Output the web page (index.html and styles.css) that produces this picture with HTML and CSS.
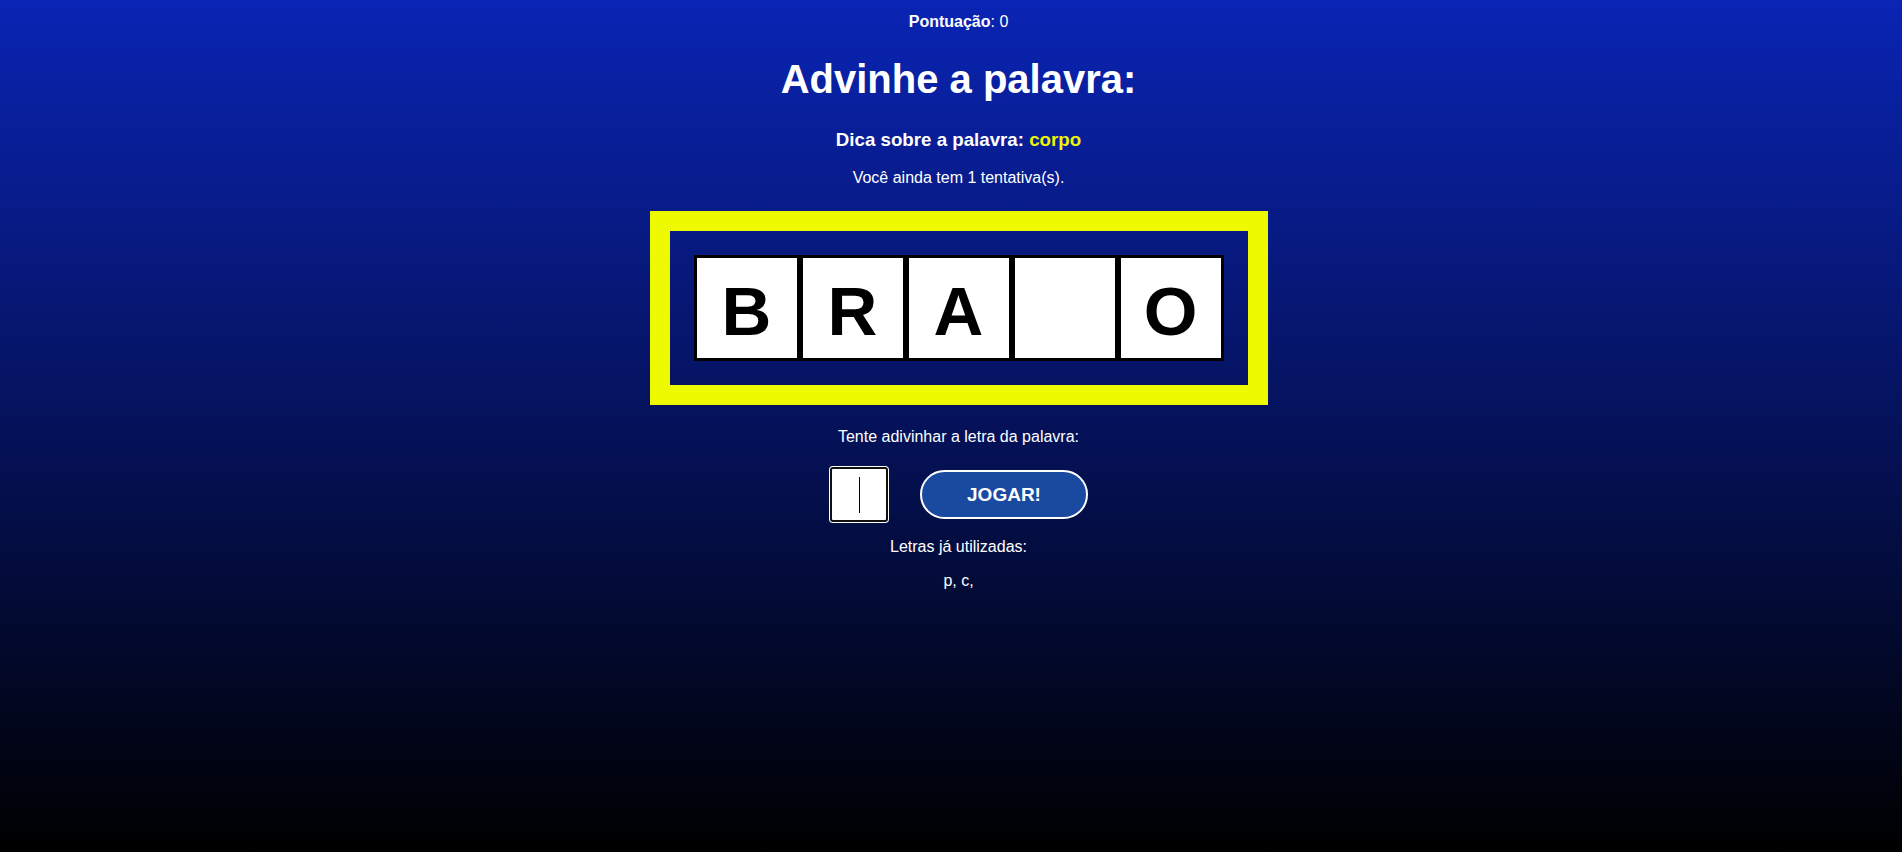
FILE: index.html
```html
<!DOCTYPE html>
<html lang="pt-BR">
<head>
<meta charset="utf-8">
<title>Advinhe a palavra</title>
<link rel="stylesheet" href="styles.css">
</head>
<body>
<main class="game">
  <p class="score"><strong>Pontuação</strong>: 0</p>
  <h1 class="title">Advinhe a palavra:</h1>
  <h3 class="hint">Dica sobre a palavra: <span class="hint-word">corpo</span></h3>
  <p class="tries">Você ainda tem 1 tentativa(s).</p>
  <div class="board">
    <div class="tiles">
      <div class="tile">B</div>
      <div class="tile">R</div>
      <div class="tile">A</div>
      <div class="tile"></div>
      <div class="tile">O</div>
    </div>
  </div>
  <p class="prompt">Tente adivinhar a letra da palavra:</p>
  <div class="controls">
    <div class="input-wrap">
      <input class="letter-input" type="text" maxlength="1" aria-label="Letra">
      <span class="caret"></span>
    </div>
    <button class="play" type="button">JOGAR!</button>
  </div>
  <p class="used-label">Letras já utilizadas:</p>
  <p class="used">p, c,</p>
</main>
</body>
</html>
```
FILE: styles.css
```css
html, body {
  margin: 0;
}
body {
  min-height: 100vh;
  background: linear-gradient(to bottom, #0a24b4 0%, #000000 100%);
  color: #ffffff;
  font-family: "Liberation Sans", Arial, sans-serif;
  font-size: 16px;
}
.game {
  display: flex;
  flex-direction: column;
  align-items: center;
  padding-left: 15px;
  padding-top: 13px;
}
.score {
  margin: 0;
  line-height: 18px;
}
.title {
  margin: 25px 0 0;
  font-size: 40px;
  line-height: 46px;
  font-weight: bold;
}
.hint {
  margin: 26px 0 0;
  font-size: 18.72px;
  line-height: 23px;
  font-weight: bold;
}
.hint-word {
  color: #eef500;
}
.tries {
  margin: 18px 0 0;
  line-height: 18px;
}
.board {
  margin-top: 24px;
  border: 20px solid #eefa00;
  padding: 24px;
}
.tiles {
  display: flex;
}
.tile {
  box-sizing: border-box;
  width: 106px;
  height: 106px;
  padding-top: 6px;
  border: 3px solid #000;
  background: #fff;
  color: #000;
  font-size: 69px;
  font-weight: bold;
  display: flex;
  align-items: center;
  justify-content: center;
}
.prompt {
  margin: 23px 0 0;
  line-height: 18px;
}
.controls {
  margin-top: 20px;
  display: flex;
  align-items: center;
  gap: 31px;
}
.input-wrap {
  position: relative;
  width: 60px;
  height: 57px;
  display: flex;
  align-items: center;
  justify-content: center;
}
.letter-input {
  box-sizing: border-box;
  width: 58px;
  height: 55px;
  margin: 0;
  padding: 0;
  border: 2px solid #111;
  border-radius: 3px;
  box-shadow: 0 0 0 1px #fff;
  background: #fff;
  font-size: 30px;
  text-align: center;
  outline: none;
}
.caret {
  position: absolute;
  left: 30px;
  top: 11px;
  width: 1px;
  height: 36px;
  background: #000;
}
.play {
  box-sizing: border-box;
  width: 168px;
  height: 49px;
  border: 2px solid #fff;
  border-radius: 25px;
  background: #1a4aa0;
  color: #fff;
  font-family: "Liberation Sans", Arial, sans-serif;
  font-size: 19px;
  font-weight: bold;
  padding: 0;
}
.used-label {
  margin: 15px 0 0;
  line-height: 18px;
}
.used {
  margin: 16px 0 0;
  line-height: 18px;
}
```
